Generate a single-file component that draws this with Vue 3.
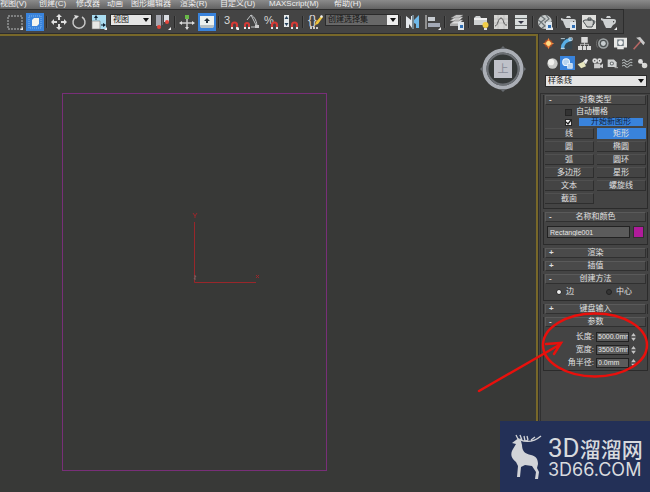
<script setup>
import { ref } from 'vue'

const menus = ['视图(V)', '创建(C)', '修改器', '动画', '图形编辑器', '渲染(R)', '自定义(U)', 'MAXScript(M)', '帮助(H)']
const shapes = ['线', '矩形', '圆', '椭圆', '弧', '圆环', '多边形', '星形', '文本', '螺旋线', '截面']
const activeShape = ref('矩形')
const autoGrid = ref(false)
const startNew = ref(true)
const objectName = ref('Rectangle001')
const method = ref('edge')
const params = ref([
  { id: 'length', label: '长度:', value: '5000.0mm' },
  { id: 'width', label: '宽度:', value: '3500.0mm' },
  { id: 'radius', label: '角半径:', value: '0.0mm' }
])

const magnet = '<path d="M9 13v-2a2.500 2.500 0 0 1 5 0v2" fill="none" stroke="#d63a36" stroke-width="2.200"/><path d="M8 13h2v2H8zM13 13h2v2h-2z" fill="#e8e8e8"/>'
const page = '<path d="M9 8h6v8H9z" fill="#dfe6ec"/><path d="M11 11h3v3h-3z" fill="#2f6fb5"/>'
const pot = '<path d="M0 4l3 1h8c2 0 4 0 4 2s-1 3-3 4l-2 3H5L3 10 2 7 0 6zM6 2h3l1 2H5z" fill="#cdd0d1"/><path d="M12 7h1.500L12 9z" fill="#444"/>'

const tools = [
  { name: '矩形选择区域', art: '<path d="M1 2h14v13H1z" fill="none" stroke="#b9bcbd" stroke-dasharray="2 1"/>', more: true },
  { name: '窗口/交叉', on: true, art: '<path d="M2 2h12v12H2z" fill="none" stroke="#7fb4ee" stroke-dasharray="1 1"/><path d="M5 6l2-2h5v6l-2 2H5z" fill="#f4f4ee"/>' },
  { sep: true },
  { name: '移动', art: '<path d="M8 3v3M8 10v3M3 8h3M10 8h3" stroke="#ddd" stroke-width="2"/><path d="M8 0l3 3H5zM8 16l3-3H5zM0 8l3-3v6zM16 8l-3-3v6z" fill="#e2e2e2"/>' },
  { name: '旋转', art: '<path d="M5 3a6 6 0 1 0 6 0" fill="none" stroke="#c9c9c9" stroke-width="1.500"/><path d="M3 1l5 1-3 3z" fill="#ddd"/>' },
  { name: '缩放', art: '<path d="M1 1h14v14H1z" fill="#a9dcf0"/><path d="M1 7h8v8H1z" fill="#e8e8e6" stroke="#777" stroke-width=".6"/><path d="M5 6V3M10 11h3" stroke="#123"/><path d="M3 4l2-3 2 3zM12 9l3 2-3 2z" fill="#123"/>', more: true },
  { select: 'view', text: '视图' },
  { name: '使用轴点中心', art: '<path d="M1 1h5v11H1z" fill="#a5a7b0"/><path d="M9 1h5v7H9z" fill="#dadde2"/><path d="M7 1h1v10H7z" fill="#6a6c74"/><circle cx="4" cy="13" r="2" fill="#e2453b"/><circle cx="12" cy="8" r="2" fill="#e2453b"/>', more: true },
  { sep: true },
  { name: '选择并操纵', art: '<path d="M8 2v12M2 9h12" stroke="#ccc" stroke-width="1.500"/><path d="M0 9l3-2v4zM16 9l-3-2v4zM8 16l-2-3h4z" fill="#ddd"/><path d="M6 1h4v4H6z" fill="#68b847"/>' },
  { name: '键盘快捷键覆盖', on: true, art: '<path d="M1 2h14v9l-1 3H2l-1-3z" fill="#edf1ef"/><path d="M1 11h14l-1 3H2z" fill="#b7c0c4"/><path d="M8 4l3 3H9v2H7V7H5z" fill="#23303c"/>' },
  { sep: true },
  { name: '捕捉开关', text: '3', art: magnet, more: true },
  { name: '角度捕捉', art: '<path d="M4 6l4-5 6 12H8M8 1c4 2 6 7 6 12" fill="none" stroke="#c3c6c8"/><path d="M2 13v-2a2 2 0 0 1 4 0v2" fill="none" stroke="#d63a36" stroke-width="2"/><path d="M1 13h2v2H1zM5 13h2v2H5z" fill="#eee"/><path d="M12 11h4v3h-4z" fill="#ccc"/>' },
  { name: '百分比捕捉', text: '%', art: magnet },
  { name: '微调器捕捉', art: '<path d="M1 1h5v12H1z" fill="#e6eaec"/><path d="M3.500 2l2 3h-4zM3.500 12l2-3h-4z" fill="#29435c"/>' + magnet },
  { sep: true },
  { name: '编辑命名选择集', text: '{}', art: '<path d="M8 11l1-3 5-6 2 1-5 7z" fill="#efc43c"/><path d="M13 3l1-2 2 1-1 2z" fill="#eee"/><path d="M3 14h9" stroke="#ccc" stroke-width="2" stroke-dasharray="2 1"/>' },
  { select: 'sets', text: '创建选择集' },
  { sep: true },
  { name: '镜像', art: '<path d="M1 2l5 4V2h1v12l-3-4v4H1z" fill="#e4e8ec"/><path d="M14 1l-5 5v3l2 1v4h3z" fill="#6fb9ea"/><path d="M8 1v14" stroke="#a8c9de"/>' },
  { name: '对齐', art: '<path d="M1 1v14" stroke="#ddd"/><path d="M3 3h7v4H3z" fill="#c7ccd1"/><path d="M3 9h12v4H3z" fill="#a3a9b6"/>', more: true },
  { sep: true },
  { name: '层管理器', art: '<path d="M1 10l5-4h8l-4 4zM1 7l5-4h8l-4 4zM2 4l5-3h7l-4 3z" fill="#dcdcdc" stroke="#777" stroke-width=".5"/><path d="M1 10v2h8v-2z" fill="#aaa"/>' + page },
  { sep: true },
  { name: '石墨建模工具', art: '<path d="M1 4l2-2h4l1 2h6v7H1z" fill="#cdd0d1"/><path d="M1 4h13v2H1z" fill="#eee"/><circle cx="12.500" cy="11" r="3" fill="#f0cc48"/><path d="M11 14h3v2h-3z" fill="#ddd"/>' },
  { name: '曲线编辑器', art: '<path d="M1 1h14v14H1z" fill="#d5d5d3"/><path d="M1 5h14M1 9h14M5 1v14M11 1v14" stroke="#aaa" stroke-width=".5"/><path d="M2 12c3 0 3-8 6-8s2 8 6 7" fill="none" stroke="#555"/>' },
  { name: '图解视图', art: '<path d="M2 1h12v14H2z" fill="#d8dcdc"/><path d="M2 4h12v1H2zM2 11h12v1H2z" fill="#626767"/><path d="M5 7h6l-3 3z" fill="#334"/>' },
  { sep: true },
  { name: '材质编辑器', art: '<circle cx="8" cy="8" r="7" fill="#c8cccc"/><path d="M4 2l4 3-4 3 4 4-3 2M9 1l3 4-4 3 4 3 3-4M1 6l3 2-2 3" fill="none" stroke="#6c7376" stroke-width="1.200"/>' + page, more: true },
  { sep: true },
  { name: '渲染设置', art: pot + page },
  { name: '渲染帧窗口', art: '<path d="M1 1h14v14H1z" fill="#e0e0dd"/><path d="M4 6h8c1 3 0 5-1 7H6C5 11 4 10 2 7l2-1zM7 4h3v2H7zM12 7c3-1 2 2 0 4" fill="#cfd0ce" stroke="#454a4d" stroke-width="1"/>' },
  { name: '渲染产品', art: pot, more: true }
]

const tabs = [
  { name: '创建', art: '<circle cx="8" cy="8" r="5" fill="#9b4929"/><path d="M8 1l2 5 5 2-5 2-2 5-2-5-5-2 5-2z" fill="#f0843d"/><circle cx="8" cy="8" r="3" fill="#ffdc84"/>' },
  { name: '修改', art: '<path d="M1 1h14v14H1z" fill="#34454f"/><path d="M3 15C3 8 7 4 14 3" fill="none" stroke="#58aee5" stroke-width="4"/><path d="M1 2h5M11 1h4v3h-4zM1 14h5" stroke="#d9e5ea" fill="none"/>' },
  { name: '层次', art: '<path d="M4 0h8v7H4zM0 11h5v5H0zM6 11h4v5H6zM11 11h5v5h-5z" fill="#dadada"/><path d="M8 6v5M3 11V9h10v2" fill="none" stroke="#ccc"/>' },
  { name: '运动', art: '<circle cx="9" cy="8" r="6.500" fill="#a0a5a6"/><circle cx="9" cy="8" r="4.500" fill="#4c5152"/><circle cx="9" cy="8" r="3" fill="#c7cdcf"/><path d="M2 3c-2 3-2 7 0 10" fill="none" stroke="#777"/>' },
  { name: '显示', art: '<path d="M0 1h16v12H0zM4 13h8v2H4z" fill="#e7e7e5"/><path d="M4 3h8v8H4z" fill="#69747b"/><circle cx="8" cy="7" r="3" fill="#f1f1f1"/>' },
  { name: '工具', art: '<path d="M2 15L11 5" stroke="#b66764" stroke-width="2"/><path d="M5 1l5-1 6 7-2 3-5-6z" fill="#c8c8c8"/>' }
]

const categories = [
  { name: '几何体', art: '<circle cx="8" cy="8" r="7.500" fill="#c8c9c7"/><circle cx="6" cy="6" r="4.500" fill="#efefec"/>' },
  { name: '图形', on: true, art: '<circle cx="6" cy="6" r="5" fill="#b8d4ef" stroke="#edf6ff" stroke-width="1.500"/><path d="M8 8h7v7H8z" fill="#bed4ea" stroke="#edf6ff"/>' },
  { name: '灯光', art: '<path d="M1 9l9-4 3 7-7 3z" fill="#e8e7bf"/><path d="M9 5l4-4 3 2-3 6z" fill="#eee"/>' },
  { name: '摄影机', art: '<circle cx="4" cy="4" r="3.500" fill="#ddd"/><circle cx="11" cy="4" r="3.500" fill="#ddd"/><path d="M3 8h9v7H3zM12 11l4-3v7l-4-2z" fill="#ccc"/><circle cx="4" cy="4" r="1" fill="#444"/><circle cx="11" cy="4" r="1" fill="#444"/>' },
  { name: '辅助对象', art: '<path d="M1 2h9l4 4v7H1z" fill="#d0d2d2"/><circle cx="7" cy="8" r="3" fill="#6b7072"/><circle cx="7" cy="8" r="1.500" fill="#eee"/><path d="M11 14h5" stroke="#ddd"/>' },
  { name: '空间扭曲', art: '<path d="M0 4q3-3 5 0t5 0t5-1M0 8q3-3 5 0t5 0t5-1M0 12q3-3 5 0t5 0t5-1" fill="none" stroke="#b3b8b9" stroke-width="1.500"/>' },
  { name: '系统', art: '<circle cx="5" cy="5" r="3.500" fill="#ddd"/><circle cx="11" cy="11" r="4" fill="#d5d5d2"/><path d="M5 5l6 6" stroke="#ddd" stroke-width="2"/>' }
]
</script>

<template>
  <div class="app">
    <nav class="menubar">
      <a v-for="m in menus" :key="m" href="#">{{ m }}</a>
    </nav>

    <div class="toolbar">
      <template v-for="(t, i) in tools" :key="i">
        <span v-if="t.sep" class="sep"></span>
        <span v-else-if="t.select" class="combo" :class="t.select">
          <select :aria-label="t.text"><option>{{ t.text }}</option></select>
          <svg viewBox="0 0 6 4"><path d="M0 0h6L3 4z" fill="#111" /></svg>
        </span>
        <button v-else class="tool" :class="{ on: t.on }" :aria-label="t.name">
          <svg viewBox="0 0 16 16">
            <text v-if="t.text" x="1" y="10" fill="#d8d8d8" :font-size="t.text === '{}' ? 13 : 11">{{ t.text }}</text>
            <g v-html="t.art"></g>
            <path v-if="t.more" d="M16 13v3h-3z" fill="#eee" />
          </svg>
        </button>
      </template>
    </div>

    <div class="workspace">
      <main class="viewport">
        <svg class="scene">
          <rect x="62.500" y="57.500" width="264" height="377" fill="none" stroke="#782f78" />
          <path d="M194.500 186v60.500H256" fill="none" stroke="#99272b" />
          <path d="M193 177l2 3 2-3M195 180v2M256 239l3 3M259 239l-3 3" fill="none" stroke="#99272b" />
          <path d="M194 240h2l-2 3h2" fill="none" stroke="#776060" />
        </svg>
        <svg class="cube" viewBox="0 0 48 48">
          <circle cx="24" cy="24" r="18.500" fill="#343838" stroke="#aaaeb5" stroke-width="4" />
          <circle cx="24" cy="24" r="15.500" fill="none" stroke="#6b6f74" stroke-width="2" />
          <path d="M21 4l3-3 3 3zM21 44l3 3 3-3zM4 21l-3 3 3 3zM44 21l3 3-3 3z" fill="#666a6e" />
          <path d="M15 15h18v18H15z" fill="#bfc1c9" />
          <text x="24" y="28" text-anchor="middle" font-size="11" fill="#878a96">上</text>
        </svg>
      </main>

      <aside class="panel">
        <div class="tabs">
          <button v-for="t in tabs" :key="t.name" :aria-label="t.name"><svg viewBox="0 0 16 16" v-html="t.art"></svg></button>
        </div>
        <div class="categories">
          <button v-for="c in categories" :key="c.name" :class="{ on: c.on }" :aria-label="c.name"><svg viewBox="0 0 16 16" v-html="c.art"></svg></button>
        </div>
        <span class="combo kind">
          <select aria-label="图形类别"><option>样条线</option></select>
          <svg viewBox="0 0 6 4"><path d="M0 0h6L3 4z" fill="#111" /></svg>
        </span>

        <div class="rollouts">
          <section class="rollout">
            <button class="head"><i>-</i>对象类型</button>
            <div class="types">
              <label class="check"><input v-model="autoGrid" type="checkbox" /><span>自动栅格</span></label>
              <label class="check">
                <span class="box">
                  <input v-model="startNew" type="checkbox" />
                  <svg v-if="startNew" viewBox="0 0 7 7"><path d="M1 3l2 2 3-4" fill="none" stroke="#222" stroke-width="1.300" /></svg>
                </span>
                <span class="start">开始新图形</span>
              </label>
              <div class="shapes">
                <button v-for="s in shapes" :key="s" :class="{ on: s === activeShape }" @click="activeShape = s">{{ s }}</button>
              </div>
            </div>
          </section>

          <section class="rollout">
            <button class="head"><i>-</i>名称和颜色</button>
            <div class="naming">
              <input v-model="objectName" type="text" aria-label="名称" />
              <button class="swatch" aria-label="颜色"></button>
            </div>
          </section>

          <section class="rollout closed"><button class="head"><i>+</i>渲染</button></section>
          <section class="rollout closed"><button class="head"><i>+</i>插值</button></section>

          <section class="rollout">
            <button class="head"><i>-</i>创建方法</button>
            <div class="methods">
              <label><input v-model="method" type="radio" name="method" value="edge" />边</label>
              <label><input v-model="method" type="radio" name="method" value="center" />中心</label>
            </div>
          </section>

          <section class="rollout closed"><button class="head"><i>+</i>键盘输入</button></section>

          <section class="rollout">
            <button class="head"><i>-</i>参数</button>
            <div class="params">
              <template v-for="p in params" :key="p.id">
                <label :for="p.id">{{ p.label }}</label>
                <input :id="p.id" v-model="p.value" type="text" />
                <svg viewBox="0 0 6 10"><path d="M0 4l3-4 3 4zM0 6h6l-3 4z" fill="#c4c4c4" /></svg>
              </template>
            </div>
            <svg class="markup" viewBox="0 0 176 88">
              <g fill="none" stroke="#e9100c" stroke-linecap="round" stroke-width="2.500">
                <ellipse cx="122" cy="37" rx="52" ry="31.500" />
                <path d="M6 83L86 37M73 36l15-1-7 11" />
              </g>
            </svg>
          </section>
        </div>
      </aside>
    </div>

    <div class="brand">
      <svg viewBox="0 0 32 46">
        <path d="M2 9l4-3 3-2 2 3 1 4c0 6 3 9 9 10 5 1 7 4 7 9l-1 4 2 4-1 7h-3l1-7-4-6-7-1-4 2-1 10H7l1-11-2-4C1 24 0 20 3 15l3-5z" fill="#d2d4d8" />
        <path d="M8 5L6 1M10 5c2 2 5 3 8 1M12 6l-2-5M15 7l-1-5M18 6l-1-4M10 6c8 3 14 2 21-4M21 6l4-3" fill="none" stroke="#d2d4d8" stroke-width="1.300" />
      </svg>
      <div class="words">
        <div class="cn"><b>3D</b>溜溜网</div>
        <div class="url">3D66.COM</div>
      </div>
    </div>
  </div>
</template>

<style>
body { background: #383937; }
</style>

<style scoped>
.app { position: relative; display: flex; flex-direction: column; min-height: 100vh; overflow: hidden; background: #444444; color: #e0e0e0; font: 8px/10px "Liberation Sans", "Noto Sans CJK SC", sans-serif; }
* { box-sizing: border-box; }
button { padding: 0; border: 0; background: none; color: inherit; font: inherit; }
input, select { margin: 0; padding: 0; font: inherit; appearance: none; border-radius: 0; }
svg { display: block; }

.menubar { display: grid; grid-template-columns: 39px 37px 31px 24px 49px 40px 49px 65px 1fr; height: 9px; background: linear-gradient(#8b8b8b, #626262); line-height: 8px; white-space: nowrap; }
.menubar a { color: #eeeeee; text-decoration: none; }

.toolbar { display: flex; align-items: center; align-self: flex-start; height: 25px; padding: 0 4px 0 5px; background: #444444; border: solid #2d2d2d; border-width: 1px 1px 1px 0; }
.tool { display: grid; place-items: center; flex: none; width: 18px; height: 18px; margin: 0 1px; }
.tool svg { width: 16px; height: 16px; }
.on { background: #3983dc; }
.sep { flex: none; width: 2px; height: 12px; margin: 0 1px; border-left: 1px solid #292929; border-right: 1px solid #505050; }

.combo { display: grid; align-items: center; height: 12px; }
.combo select { grid-area: 1 / 1; width: 100%; height: 100%; padding-left: 2px; border: 1px solid #2b2b2b; background: #e5e5e5; color: #151515; }
.combo svg { grid-area: 1 / 1; justify-self: end; width: 6px; height: 4px; margin-right: 3px; pointer-events: none; }
.view { width: 42px; margin: 0 1px 4px; }
.sets { width: 74px; margin-bottom: 4px; }
.sets select { background: linear-gradient(90deg, #686868 85%, #eeeeee 85%); }

.workspace { display: flex; flex: 1; }
.viewport { position: relative; flex: 1; border: solid #786829; border-width: 2px 2px 0 0; background: #383937; outline: 1px solid #2d2d2d; }
.scene { width: 100%; height: 100%; }
.cube { position: absolute; top: 9px; right: 9px; width: 48px; height: 48px; }

.panel { display: flex; flex-direction: column; width: 112px; background: #444444; }
.tabs { display: flex; gap: 4px; padding: 2px 3px 0 4px; }
.tabs button { width: 14px; height: 14px; }
.tabs svg { width: 13px; height: 13px; }
.categories { display: flex; padding: 6px 0 0 7px; }
.categories button { display: grid; place-items: center; width: 15px; height: 14px; }
.categories svg { width: 11px; height: 11px; }
.kind { margin: 5px 3px 0 7px; }

.rollouts { display: flex; flex-direction: column; gap: 3px; flex: 1; margin: 6px 0 0 2px; padding: 1px 2px 0 2px; border: solid #303030; border-width: 1px 0 0 1px; }
.rollout { position: relative; padding: 0 1px 1px; border: 1px solid #2b2b2b; border-top: 0; background: #444444; }
.rollout.closed { padding-bottom: 0; border-bottom: 0; }
.head { display: block; position: relative; width: 100%; height: 10px; border: 1px solid #5a5a5a; border-right-color: #303030; border-bottom-color: #303030; background: #4a4a4a; line-height: 8px; text-align: center; }
.head i { position: absolute; left: 3px; font-style: normal; font-weight: bold; }

.types { padding: 2px 0 3px; }
.check { display: flex; align-items: center; gap: 4px; height: 10px; padding-left: 20px; }
.check input { width: 7px; height: 7px; border: 1px solid #252525; background: #333333; }
.check input:checked { background: #f0f0f0; }
.box { display: grid; }
.box > * { grid-area: 1 / 1; width: 7px; height: 7px; pointer-events: none; }
.start { flex: 1; margin: 0 3px; height: 8px; background: #3983dc; color: #10213a; line-height: 8px; text-align: center; }
.shapes { display: grid; grid-template-columns: 1fr 1fr; gap: 2px 3px; margin-top: 1px; }
.shapes button { height: 11px; border: solid #2e2e2e; border-width: 1px 1px 1px 0; border-top-color: #505050; line-height: 9px; }
.shapes .on { border-color: #3983dc; }

.naming { display: flex; gap: 3px; padding: 4px 2px 5px; }
.naming input { flex: 1; min-width: 0; height: 12px; padding-left: 2px; border: 1px solid #222222; background: #5b5b5b; color: #e6e6e6; font-size: 7px; }
.swatch { width: 11px; height: 12px; border: 1px solid #303030; background: #b01b9b; }

.methods { display: grid; grid-template-columns: 1fr 1fr; padding: 3px 0 2px 11px; }
.methods label { display: flex; align-items: center; gap: 4px; height: 10px; }
.methods label + label { padding-left: 5px; }
.methods input { width: 6px; height: 6px; border: 1px solid #222222; border-radius: 50%; background: #353535; }
.methods input:checked { background: #eeeeee; }

.params { display: grid; grid-template-columns: 1fr 33px 6px; gap: 3px 2px; align-items: center; padding: 5px 9px 1px 0; }
.params label { text-align: right; }
.params input { width: 100%; height: 10px; padding-left: 1px; border: 1px solid #222222; background: #5b5b5b; color: #e6e6e6; font-size: 7px; }
.params svg { width: 5px; height: 8px; }
.markup { position: absolute; top: -8px; right: -2px; width: 176px; height: 88px; pointer-events: none; }
.params + .markup { margin-top: -1px; }

.brand { position: absolute; right: 0; bottom: 0; display: flex; align-items: center; gap: 6px; width: 150px; height: 71px; padding-left: 10px; background: #233057; color: #d8dade; }
.brand > svg { flex: none; width: 32px; height: 46px; }
.words { white-space: nowrap; }
.cn { font: 500 21px/26px "Noto Sans CJK SC", sans-serif; }
.cn b { font: 400 26px/26px Roboto, sans-serif; }
.url { font: 18px/18px Inter, sans-serif; }
</style>
